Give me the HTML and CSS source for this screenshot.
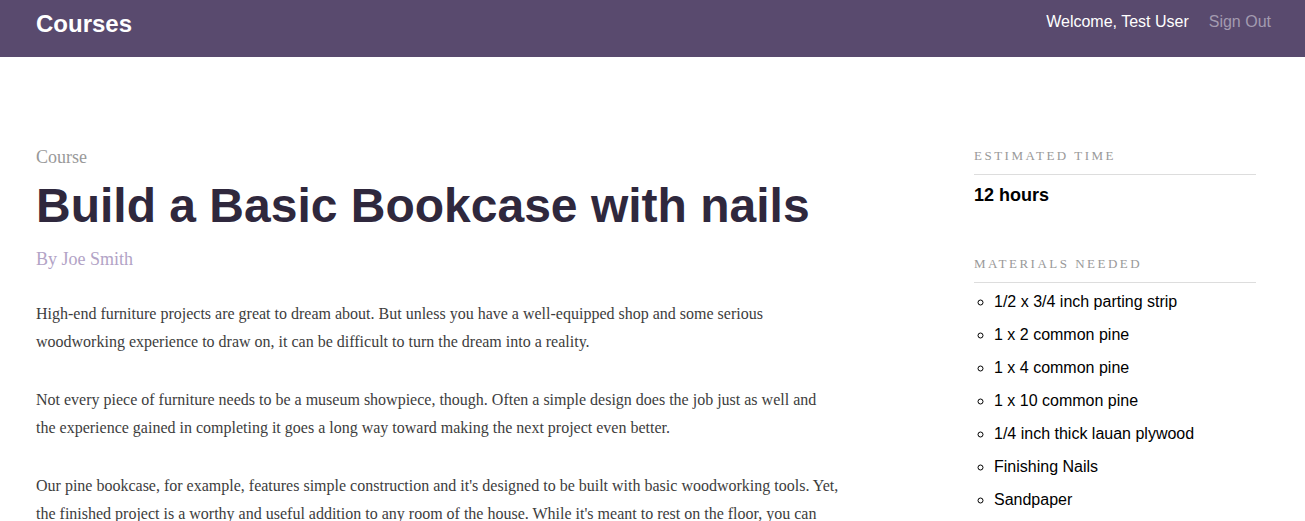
FILE: index.html
```html
<!DOCTYPE html>
<html lang="en">
<head>
<meta charset="utf-8">
<title>Courses</title>
<link rel="stylesheet" href="styles.css">
</head>
<body>
<header class="header">
  <h1 class="header-logo">Courses</h1>
  <nav class="header-nav">
    <span class="welcome">Welcome, Test User</span>
    <a class="signout" href="#">Sign Out</a>
  </nav>
</header>
<main class="course">
  <section class="course-main">
    <h4 class="course-label">Course</h4>
    <h3 class="course-title">Build a Basic Bookcase with nails</h3>
    <p class="course-author">By Joe Smith</p>
    <div class="course-desc">
      <p>High-end furniture projects are great to dream about. But unless you have a well-equipped shop and some serious woodworking experience to draw on, it can be difficult to turn the dream into a reality.</p>
      <p>Not every piece of furniture needs to be a museum showpiece, though. Often a simple design does the job just as well and the experience gained in completing it goes a long way toward making the next project even better.</p>
      <p>Our pine bookcase, for example, features simple construction and it's designed to be built with basic woodworking tools. Yet, the finished project is a worthy and useful addition to any room of the house. While it's meant to rest on the floor, you can opt to attach it to the wall for extra stability and safety.</p>
    </div>
  </section>
  <aside class="course-side">
    <h4 class="side-label">Estimated Time</h4>
    <h3 class="side-time">12 hours</h3>
    <h4 class="side-label side-label-materials">Materials Needed</h4>
    <ul class="materials">
      <li>1/2 x 3/4 inch parting strip</li>
      <li>1 x 2 common pine</li>
      <li>1 x 4 common pine</li>
      <li>1 x 10 common pine</li>
      <li>1/4 inch thick lauan plywood</li>
      <li>Finishing Nails</li>
      <li>Sandpaper</li>
    </ul>
  </aside>
</main>
</body>
</html>
```
FILE: styles.css
```css
html, body {
  margin: 0;
  padding: 0;
  background: #fff;
}
body {
  font-family: "Liberation Serif", "Times New Roman", serif;
  overflow: hidden;
}
.header {
  height: 57px;
  box-sizing: border-box;
  background: #594a6e;
  display: flex;
  align-items: flex-start;
  justify-content: space-between;
  padding: 10px 34px 0 36px;
}
.header-logo {
  margin: 0;
  font-family: "Liberation Sans", Arial, sans-serif;
  font-size: 24px;
  line-height: 28px;
  font-weight: bold;
  color: #fff;
}
.header-nav {
  display: flex;
  gap: 20px;
  padding-top: 2px;
  font-family: "Liberation Sans", Arial, sans-serif;
  font-size: 16px;
  line-height: 20px;
}
.welcome { color: #fff; }
.signout { color: #a39bb0; text-decoration: none; }

.course {
  display: flex;
  align-items: flex-start;
  padding: 88px 0 0 36px;
}
.course-main {
  width: 803px;
  flex-shrink: 0;
}
.course-label {
  margin: 0;
  font-weight: normal;
  font-size: 18px;
  line-height: 24px;
  color: #999;
}
.course-title {
  margin: 9px 0 0;
  font-family: "Liberation Sans", Arial, sans-serif;
  font-size: 48px;
  line-height: 56px;
  color: #2f283d;
  font-weight: bold;
}
.course-author {
  margin: 13px 0 0;
  font-size: 18px;
  line-height: 24px;
  color: #b2a3c6;
}
.course-desc {
  margin-top: 29px;
}
.course-desc p {
  margin: 0 0 30px;
  font-size: 16px;
  line-height: 28px;
  color: #3d3d3d;
}
.course-side {
  margin: 1px 0 0 135px;
  width: 282px;
  flex-shrink: 0;
}
.side-label {
  margin: 0;
  font-weight: normal;
  font-size: 13px;
  letter-spacing: 2.5px;
  text-transform: uppercase;
  color: #999;
  line-height: 20px;
  padding-bottom: 8px;
  border-bottom: 1px solid #ddd;
}
.side-label-materials {
  margin-top: 49px;
}
.side-time {
  margin: 10px 0 0;
  font-family: "Liberation Sans", Arial, sans-serif;
  font-size: 18px;
  line-height: 20px;
  font-weight: bold;
  color: #000;
}
.materials {
  margin: 9px 0 0;
  padding-left: 20px;
  list-style: circle;
  font-family: "Liberation Sans", Arial, sans-serif;
  font-size: 16px;
  color: #000;
}
.materials li {
  line-height: 20px;
  margin-bottom: 13px;
}
```
